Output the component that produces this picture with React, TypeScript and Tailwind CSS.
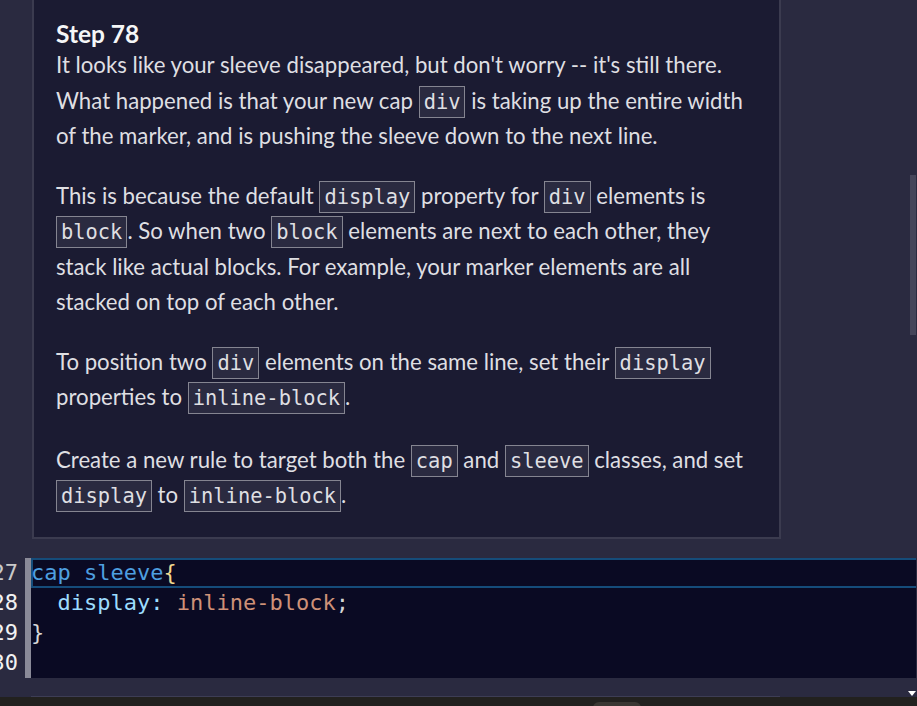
import React from 'react'

const sans = { fontFamily: 'Lato, "Open Sans", sans-serif' }

function Code({ children }: { children: React.ReactNode }) {
  return (
    <code className="rounded-none border border-[#858591] bg-[#2a2a40] px-[4px] py-[3px] font-['DejaVu_Sans_Mono',monospace] text-[20.4px] leading-none text-[#dfdfe2]">
      {children}
    </code>
  )
}

const lines = [
  {
    n: '27',
    active: true,
    content: (
      <>
        <span className="text-[#4e9fe0]">cap sleeve</span>
        <span className="text-[#efd88f]">{'{'}</span>
      </>
    ),
  },
  {
    n: '28',
    content: (
      <>
        <span className="text-[#9cdcfe]">{'  display: '}</span>
        <span className="text-[#ce9178]">inline-block</span>
        <span className="text-[#d4d4d4]">;</span>
      </>
    ),
  },
  { n: '29', content: <span className="text-[#d8d8d8]">{'}'}</span> },
  { n: '30', content: null },
]

export default function App() {
  return (
    <div className="relative flex h-[706px] w-[917px] flex-col overflow-hidden bg-[#2a2a40]">
      {/* Instructions panel */}
      <div className="h-[558px] shrink-0">
        <div
          className="ml-[32px] h-[539px] w-[749px] border-x-2 border-b-2 border-[#3b3b4f] bg-[#1b1b32] px-[22px] pt-[21px] text-[22.2px] leading-[35.5px] text-[#dfdfe2]"
          style={sans}
        >
          <h2 className="text-[24.5px] font-bold leading-[26px] text-[#f5f6f7]">Step 78</h2>
          <p>
            It looks like your sleeve disappeared, but don't worry -- it's still there. What happened
            is that your new cap <Code>div</Code> is taking up the entire width of the marker, and is
            pushing the sleeve down to the next line.
          </p>
          <p className="mt-[24px]">
            This is because the default <Code>display</Code> property for <Code>div</Code> elements is{' '}
            <Code>block</Code>. So when two <Code>block</Code> elements are next to each other, they
            stack like actual blocks. For example, your marker elements are all stacked on top of each
            other.
          </p>
          <p className="mt-[24px]">
            To position two <Code>div</Code> elements on the same line, set their <Code>display</Code>{' '}
            properties to <Code>inline-block</Code>.
          </p>
          <p className="mt-[27px]">
            Create a new rule to target both the <Code>cap</Code> and <Code>sleeve</Code> classes, and
            set <Code>display</Code> to <Code>inline-block</Code>.
          </p>
        </div>
      </div>

      {/* Editor */}
      <div className="flex h-[120px] shrink-0 font-['DejaVu_Sans_Mono',monospace] text-[22px] leading-[30px]">
        <div className="flex w-[25px] shrink-0 flex-col overflow-hidden">
          {lines.map((l) => (
            <div key={l.n} className="flex h-[30px] justify-end pr-[7px]">
              <span className={l.active ? 'text-[#c9c9c9]' : 'text-[#f2f2f2]'}>{l.n}</span>
            </div>
          ))}
        </div>
        <div className="w-[6px] shrink-0 bg-[#8a8a98]" />
        <div className="flex-1 bg-[#0a0a23]">
          {lines.map((l) => (
            <div
              key={l.n}
              className={
                l.active
                  ? 'h-[30px] whitespace-pre border-y-2 border-l-2 border-[#154c7a]'
                  : 'h-[30px] whitespace-pre'
              }
            >
              <div className={l.active ? '-ml-[2px] -mt-[2px] leading-[30px]' : ''}>{l.content}</div>
            </div>
          ))}
        </div>
        <div className="w-px shrink-0 bg-[#2a2a40]" />
      </div>

      {/* Bottom strip */}
      <div className="h-[18px] shrink-0" />
      <div className="flex h-px shrink-0">
        <div className="w-[31px]" />
        <div className="w-[749px] bg-[#3d3d55]" />
      </div>
      <div className="relative flex-1 bg-[#22211f]">
        <div className="absolute left-[593px] top-[5px] h-[6px] w-[48px] rounded-t-[6px] bg-[#3a3733]" />
      </div>

      {/* Vertical scrollbar */}
      <div className="absolute left-[910px] top-[175px] h-[160px] w-[6px] bg-[#45455a]" />
      <div className="absolute left-[908px] top-[691px] h-0 w-0 border-x-[4px] border-t-[5px] border-x-transparent border-t-white" />
    </div>
  )
}
